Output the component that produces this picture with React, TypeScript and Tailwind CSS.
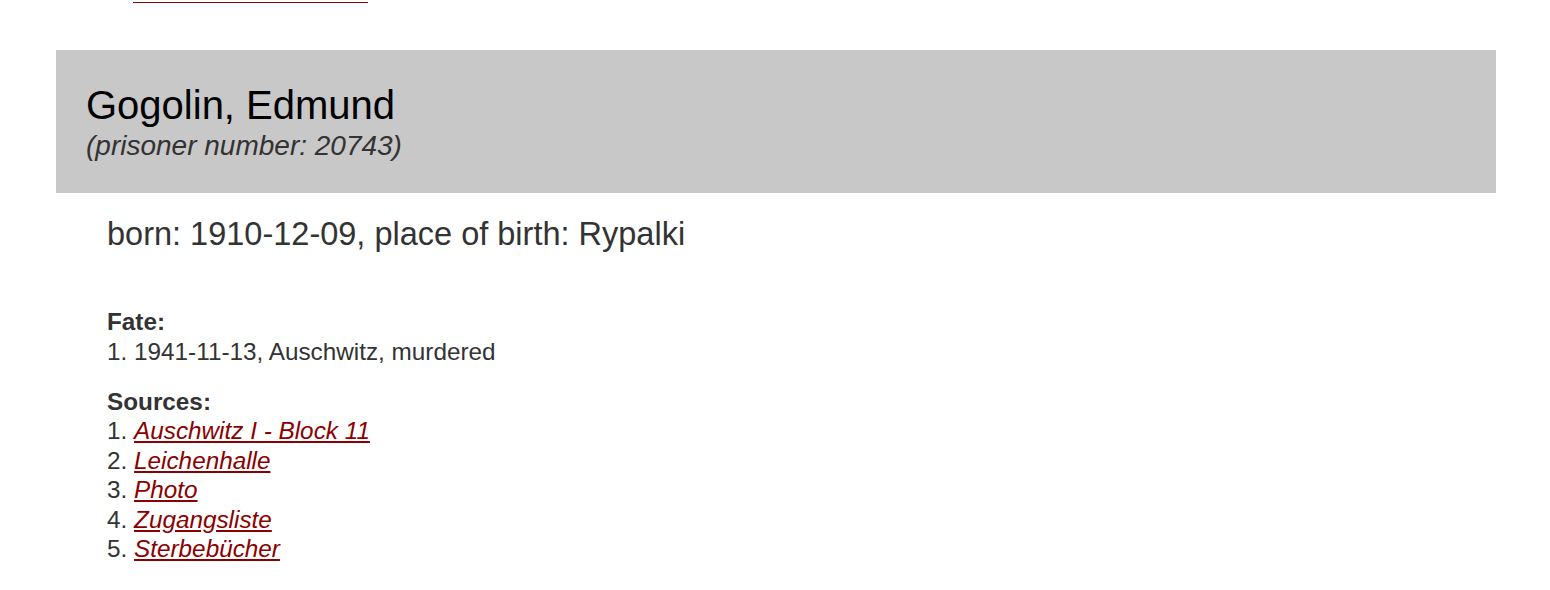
const fate = ["1941-11-13, Auschwitz, murdered"];

const sources = [
  "Auschwitz I - Block 11",
  "Leichenhalle",
  "Photo",
  "Zugangsliste",
  "Sterbebücher",
];

export default function App() {
  return (
    <div className="min-h-screen bg-white text-[#333] font-['Liberation_Sans',Arial,sans-serif]">
      {/* tail of the previous entry's link */}
      <div className="ml-[133px] w-[235px] h-[3px] border-b border-[#8b0000]" />

      <div className="ml-[56px] w-[1440px] mt-[47px]">
        {/* Header */}
        <div className="bg-[#c8c8c8] pl-[30px] pt-[33px] pb-[30px]">
          <h1 className="text-[40px] leading-[44px] text-black">Gogolin, Edmund</h1>
          <div className="mt-[2px] text-[28px] leading-[34px] italic">(prisoner number: 20743)</div>
        </div>

        {/* Details */}
        <div className="pl-[51px]">
          <div className="mt-[21px] text-[32.5px] leading-[40px]">
            born: 1910-12-09, place of birth: Rypalki
          </div>

          <div className="mt-[53px] text-[24.3px] leading-[29.5px]">
            <div className="font-bold">Fate:</div>
            {fate.map((f, i) => (
              <div key={i}>
                {i + 1}. {f}
              </div>
            ))}
          </div>

          <div className="mt-[20.5px] text-[24.3px] leading-[29.5px]">
            <div className="font-bold">Sources:</div>
            {sources.map((s, i) => (
              <div key={i}>
                {i + 1}.{" "}
                <a href="#" className="italic text-[#8b0000] underline">
                  {s}
                </a>
              </div>
            ))}
          </div>
        </div>
      </div>
    </div>
  );
}
